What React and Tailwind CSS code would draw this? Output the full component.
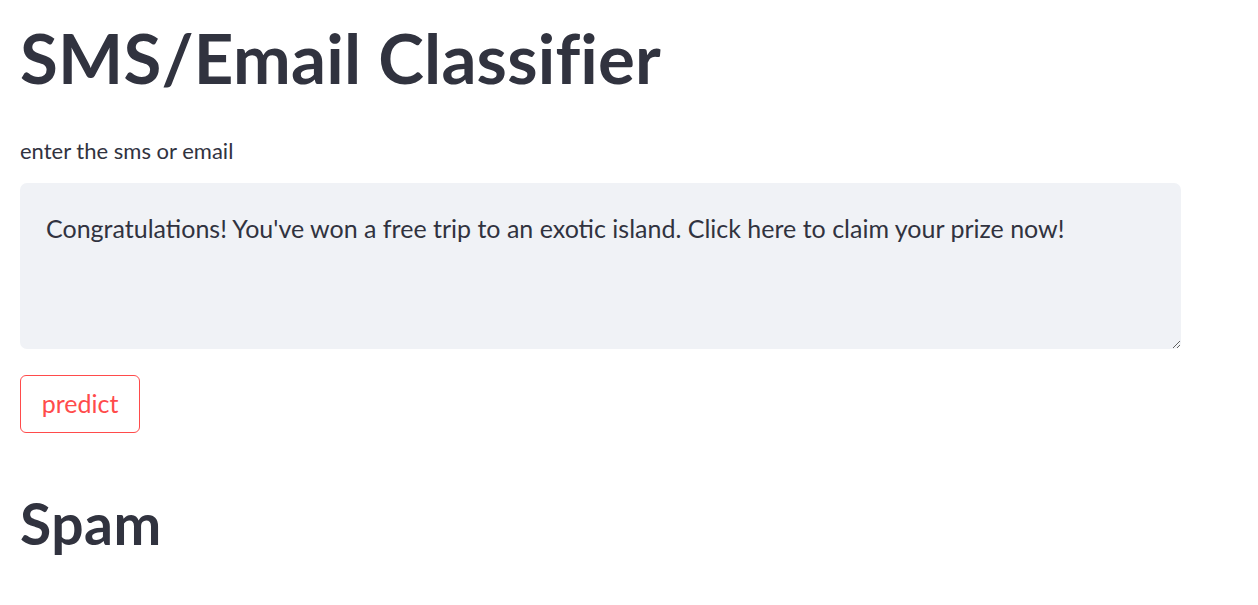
import { useState } from "react";

function App() {
  const [text, setText] = useState(
    "Congratulations! You've won a free trip to an exotic island. Click here to claim your prize now!"
  );

  return (
    <div className="min-h-screen bg-white px-[20px] font-['Lato',sans-serif] text-[#31333F]">
      <h1 className="pt-[17px] text-[69px] font-bold leading-[1.2] tracking-[0.2px]">
        SMS/Email Classifier
      </h1>

      <label className="mt-[38px] block text-[22px] leading-[1.2]">enter the sms or email</label>

      <textarea
        value={text}
        onChange={(e) => setText(e.target.value)}
        className="mt-[19px] block h-[166px] w-[1161px] rounded-[7px] bg-[#F0F2F6] pl-[26px] pr-[26px] pt-[25px] text-[25px] leading-[40px] text-[#31333F] outline-none"
      />

      <button className="mt-[26px] flex h-[58px] w-[120px] items-center justify-center rounded-[6px] border border-[#FF4B4B] bg-white text-[25px] text-[#FF4B4B]">
        predict
      </button>

      <h2 className="mt-[56px] text-[57px] font-bold leading-[1.2] tracking-[0.5px]">Spam</h2>
    </div>
  );
}

export default App;
